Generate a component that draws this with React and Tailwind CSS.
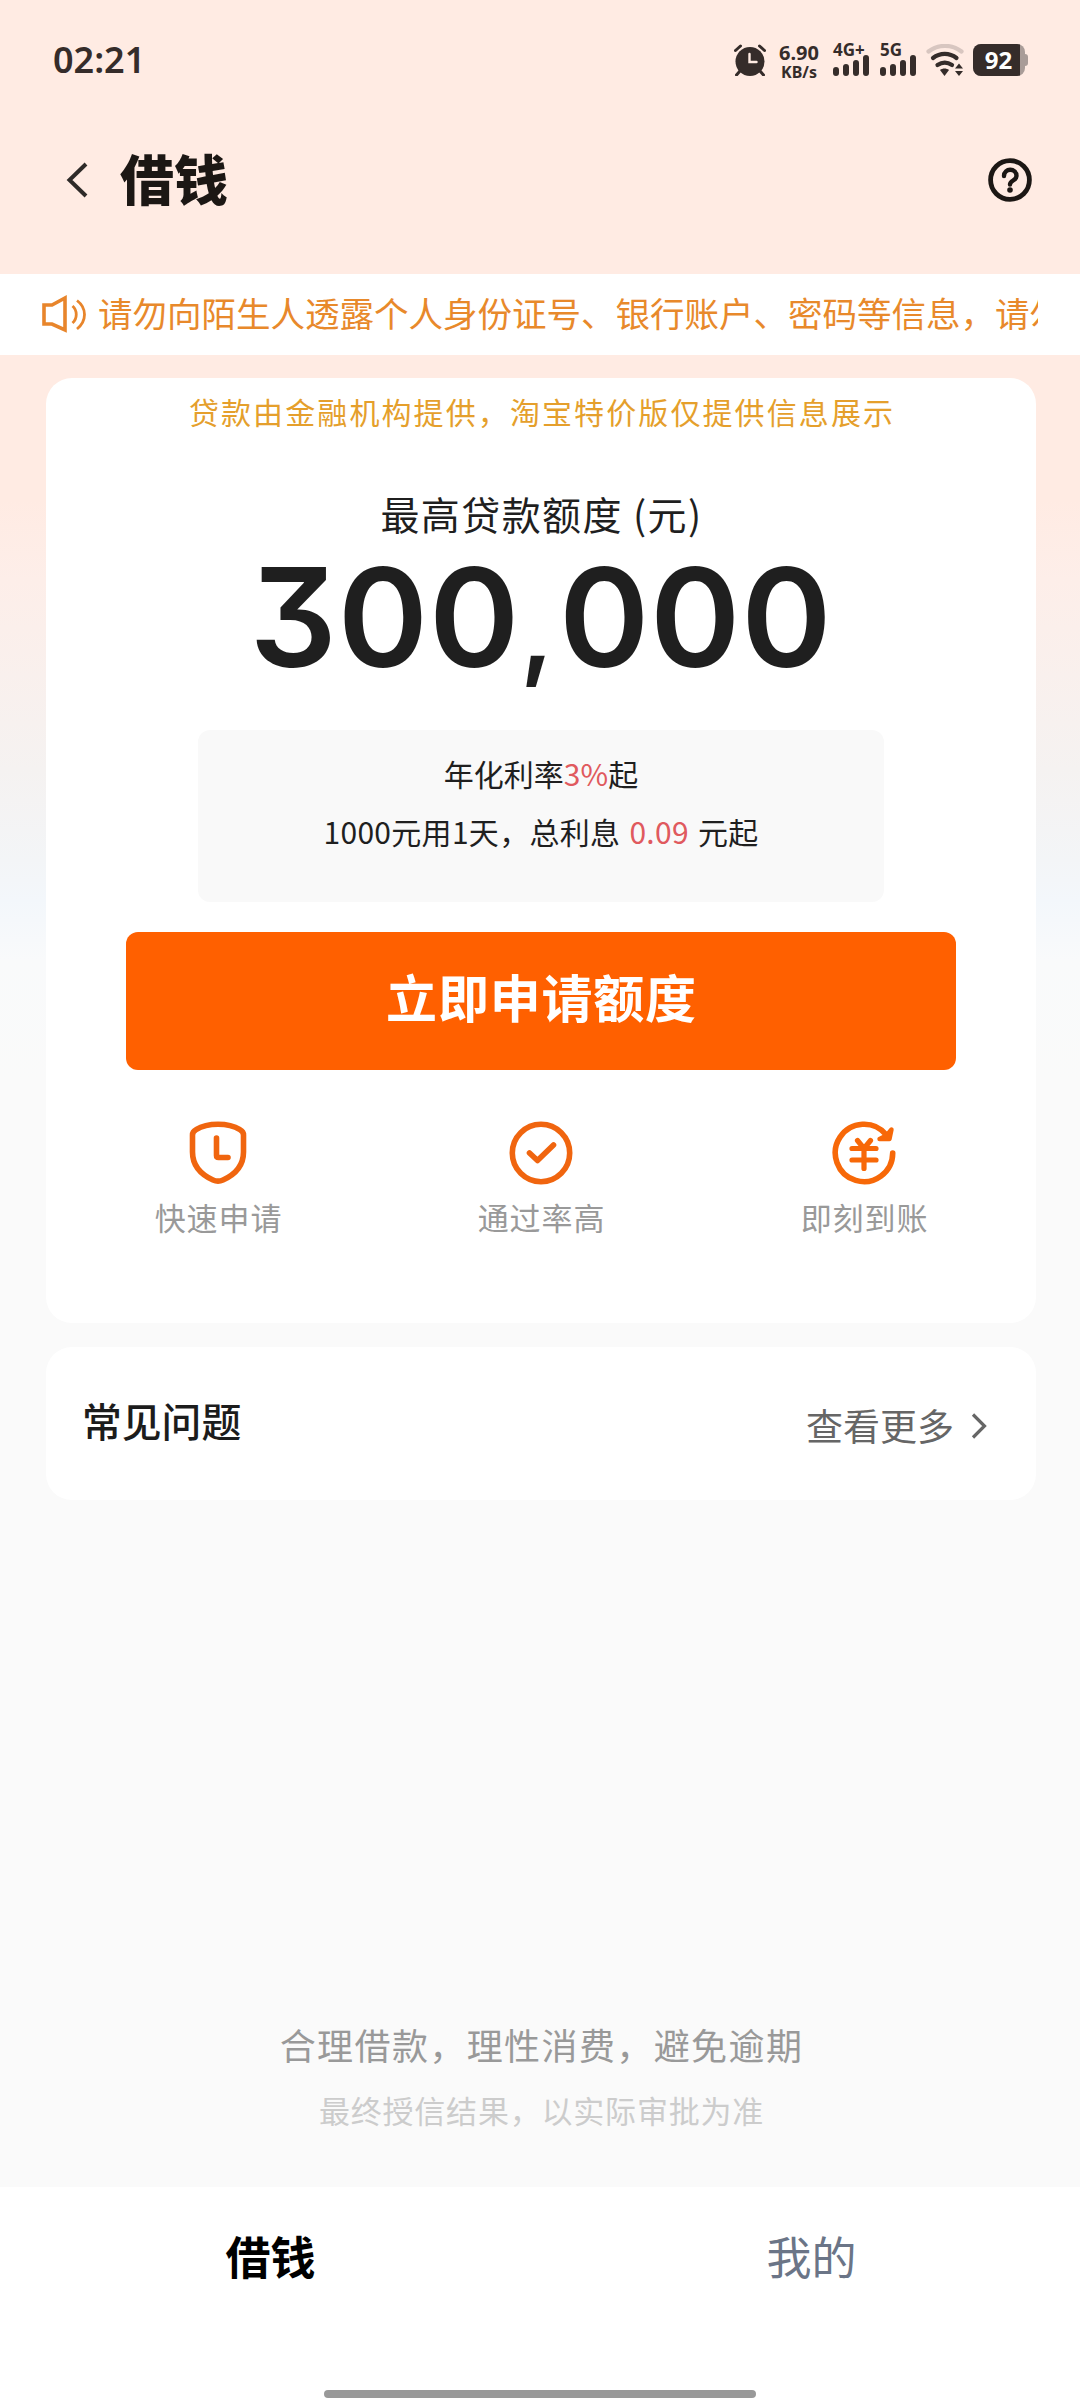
const features = [
  {
    label: '快速申请',
    icon: (
      <svg viewBox="0 0 64 64" className="h-16 w-16" fill="none" stroke="#f0650f" strokeWidth="5.6" strokeLinecap="round" strokeLinejoin="round">
        <path d="M6.500 14c0-2.500 1.200-4.200 3.500-5.300C16 5 24 3.300 32 3.300s16 1.700 22 5.400c2.300 1.100 3.500 2.800 3.500 5.300V31c0 14-9.500 23-20.500 28-3.500 1.600-6.500 1.600-10 0C16 54 6.500 45 6.500 31z" />
        <path d="M30.500 17v17.500q0 2 2 2H42" />
      </svg>
    ),
  },
  {
    label: '通过率高',
    icon: (
      <svg viewBox="0 0 64 64" className="h-16 w-16" fill="none" stroke="#f0650f" strokeWidth="5.6" strokeLinecap="round" strokeLinejoin="round">
        <circle cx="32" cy="32" r="28.7" />
        <path d="M20.500 32 28.500 39.500 44.500 24" />
      </svg>
    ),
  },
  {
    label: '即刻到账',
    icon: (
      <svg viewBox="0 0 64 64" className="h-16 w-16" fill="none" stroke="#f76808" strokeWidth="5.6" strokeLinecap="round" strokeLinejoin="round">
        <path d="M60.700 32A28.700 28.700 0 1 1 54 13.500" />
        <path d="M59.500 8.500 57.500 18H47.500l7-3.500z" fill="#f76808" strokeWidth="4.4" />
        <path d="m25.500 19.500 6.500 8 6.500-8M20 27.500h24M20 39h24M32 28v19.500" strokeWidth="5.2" />
      </svg>
    ),
  },
]

function SignalBars() {
  return (
    <svg viewBox="0 0 36 22" className="h-[22px] w-9" stroke="#352c2a" strokeWidth="6" strokeLinecap="round">
      <path d="M3 16v3M13 13v6M23 9v10M33 4v15" />
    </svg>
  )
}

function StatusBar() {
  return (
    <div className="flex h-[120px] items-center pl-[53px] pr-[52px] text-[#352c2a]">
      <span className="font-['Noto_Sans'] text-[36px] font-semibold leading-[40px]">02:21</span>
      <div className="ml-auto flex h-8 items-end">
        <svg viewBox="0 0 32 32" className="h-8 w-8" fill="none" stroke="#352c2a" strokeWidth="3" strokeLinecap="round">
          <circle cx="16" cy="17.5" r="14.5" fill="#352c2a" stroke="none" />
          <path d="M1.500 6.500 6.500 2M30.500 6.500 25.500 2M6 27l-3.500 4M26 27l3.500 4" />
          <path d="M15.500 10v8h7" stroke="#ffebe3" strokeWidth="2.4" />
        </svg>
        <div className="-mb-[5px] ml-[11px] mr-[2px] w-[44px] text-center font-['Noto_Sans'] font-bold">
          <div className="text-[20px] leading-[20px]">6.90</div>
          <div className="text-[16px] leading-[18px]">KB/s</div>
        </div>
        <div className="ml-[10px] flex w-[38px] flex-col">
          <span className="-mb-[3px] whitespace-nowrap font-['Noto_Sans'] text-[17px] font-bold leading-[14px]">4G+</span>
          <SignalBars />
        </div>
        <div className="ml-[9px] flex w-[38px] flex-col">
          <span className="-mb-[3px] whitespace-nowrap font-['Noto_Sans'] text-[17px] font-bold leading-[14px]">5G</span>
          <SignalBars />
        </div>
        <svg viewBox="0 0 38 32" className="ml-[8px] h-8 w-[38px]" fill="none" stroke="#352c2a" strokeWidth="4.2" strokeLinecap="round">
          <path d="M2.500 7.500C12 0 26 0 35.500 7.500" stroke="#d8c6c0" />
          <path d="M7 14c7-5.500 16.500-5.500 23.500 0M11.500 21c4.500-3 10-3 14.500 0" />
          <path d="M14 26c2.500-2 6.500-2 9 0l-4.500 6z" fill="#352c2a" stroke="none" />
          <path d="m33 19.500 4 5h-8zM33 32l4-5h-8z" fill="#352c2a" stroke="none" />
        </svg>
        <div className="ml-[9px] flex items-center">
          <div className="flex h-8 w-[52px] items-center overflow-hidden rounded-lg bg-[#a99c98]">
            <span className="h-8 w-[47px] bg-[#352c2a] pl-[4px] text-center font-['Noto_Sans'] text-[24px] font-bold leading-[32px] text-white">92</span>
          </div>
          <span className="h-3 w-[3px] rounded-r-sm bg-[#a99c98]" />
        </div>
      </div>
    </div>
  )
}

function Header() {
  return (
    <header className="flex h-[154px] items-start pl-[66px] pr-12 text-[#1c1714]">
      <svg viewBox="0 0 22 36" className="mt-[42px] h-9 w-[22px]" fill="none" stroke="#2e2a28" strokeWidth="4">
        <path d="M20 2 3.500 18 20 34" />
      </svg>
      <h1 className="ml-[32px] mt-[28px] text-[54px] font-black leading-[60px]">借钱</h1>
      <svg viewBox="0 0 44 44" className="ml-auto mt-[38px] h-11 w-11" fill="none" stroke="#1c1714" strokeWidth="4.8" strokeLinecap="round">
        <circle cx="22" cy="22" r="19.4" />
        <path d="M16 18c0-8.500 12.500-8 12.500 0 0 4.500-6.500 4.500-6.500 8.500" strokeWidth="4.4" />
        <circle cx="22" cy="32" r="2.8" fill="#1c1714" stroke="none" />
      </svg>
    </header>
  )
}

function NoticeBar() {
  return (
    <div className="flex h-[81px] items-start bg-white pl-[41px] pr-[42px] pt-[16px] text-[#e8892b]">
      <svg viewBox="0 0 48 38" className="mt-[5px] h-[38px] w-12 shrink-0" fill="none" stroke="#e8852b" strokeWidth="3.6">
        <path d="M3 10h8L24 3v32L11 29H3z" />
        <path d="M31.500 11c5 4.500 5 12.500 0 17M36 5.500c10 7.500 10 20.500 0 28.500" strokeWidth="2.8" />
      </svg>
      <p className="ml-[9px] overflow-hidden whitespace-nowrap text-[34.5px] leading-[44px]">
        请勿向陌生人透露个人身份证号、银行账户、密码等信息，请勿向他人转账
      </p>
    </div>
  )
}

function LoanCard() {
  return (
    <section className="flex h-[945px] flex-col items-center rounded-[26px] bg-white text-[#1f1f1f]">
      <p className="mt-[13px] pl-[2px] text-[30px] leading-[40px] tracking-[2.1px] text-[#e59f2c]">贷款由金融机构提供，淘宝特价版仅提供信息展示</p>
      <h2 className="mt-[57px] pl-px text-[39px] leading-[50px] tracking-[1.4px]">最高贷款额度 (元)</h2>
      <div className="mt-[9px] h-[140px] whitespace-nowrap font-['Inter'] text-[137px] font-semibold leading-[140px] tracking-[0.8px] [font-feature-settings:'cv09']">
        300<span className="text-[106px] tracking-[5px]">,</span>000
      </div>
      <div className="mt-[43px] flex h-[172px] w-[686px] flex-col items-center rounded-xl bg-[#f9f9f9] pt-[14px] text-[30px] leading-[58px]">
        <p>年化利率<span className="text-[#e05a5e]">3%</span>起</p>
        <p className="tracking-[0.3px] [word-spacing:2px]">1000元用1天，总利息 <span className="text-[#e05a5e]">0.09</span> 元起</p>
      </div>
      <button className="mt-[30px] flex h-[138px] w-[830px] justify-center rounded-xl bg-[#ff6000] pl-px pt-[34px] text-[51px] font-bold leading-[60px] tracking-[0.8px] text-white">
        立即申请额度
      </button>
      <div className="mt-[51px] grid grid-cols-[323px_323px_323px]">
        {features.map((item) => (
          <div key={item.label} className="flex flex-col items-center">
            {item.icon}
            <span className="mt-[12px] pl-px text-[31px] leading-[40px] tracking-[0.9px] text-[#999999]">{item.label}</span>
          </div>
        ))}
      </div>
    </section>
  )
}

function FaqCard() {
  return (
    <section className="mt-6 flex h-[153px] items-start rounded-[26px] bg-white pl-[36px] pr-[49px]">
      <h3 className="mt-[48px] text-[39.8px] font-medium leading-[50px] text-[#1c1c1c]">常见问题</h3>
      <span className="ml-auto mt-[53px] text-[37px] leading-[50px] text-[#666666]">查看更多</span>
      <svg viewBox="0 0 16 26" className="ml-[17px] mt-[66px] h-[26px] w-4" fill="none" stroke="#666666" strokeWidth="3.2">
        <path d="M2 1.500 13.500 13 2 24.500" />
      </svg>
    </section>
  )
}

export default function App() {
  return (
    <div className="flex h-[2400px] w-[1080px] flex-col overflow-hidden bg-[#fafafa] bg-[linear-gradient(180deg,#ffebe3_0px,#ffebe3_500px,#fdeee9_580px,#f5f2f1_770px,#f3f5f7_860px,#f3f7fb_900px,#f9fafb_960px,#fafafa_1080px)] font-['Noto_Sans_CJK_SC',sans-serif]">
      <StatusBar />
      <Header />
      <NoticeBar />
      <main className="flex flex-1 flex-col pl-[46px] pr-[44px] pt-[23px]">
        <LoanCard />
        <FaqCard />
        <div className="mt-auto flex flex-col items-center pb-[57px]">
          <p className="pl-px text-[36px] leading-[46px] tracking-[1.4px] text-[#999999]">合理借款，理性消费，避免逾期</p>
          <p className="mt-[23px] pl-px text-[31px] leading-[40px] tracking-[0.8px] text-[#cccccc]">最终授信结果，以实际审批为准</p>
        </div>
      </main>
      <nav className="flex h-[213px] flex-col bg-white">
        <div className="grid grid-cols-2 pt-[39px] text-center text-[45px] leading-[60px]">
          <span className="pl-px font-bold text-black">借钱</span>
          <span className="pl-[3px] text-[#6b7587]">我的</span>
        </div>
        <div className="mx-auto mb-[2px] mt-auto h-2 w-[432px] rounded-full bg-[#999999]" />
      </nav>
    </div>
  )
}
